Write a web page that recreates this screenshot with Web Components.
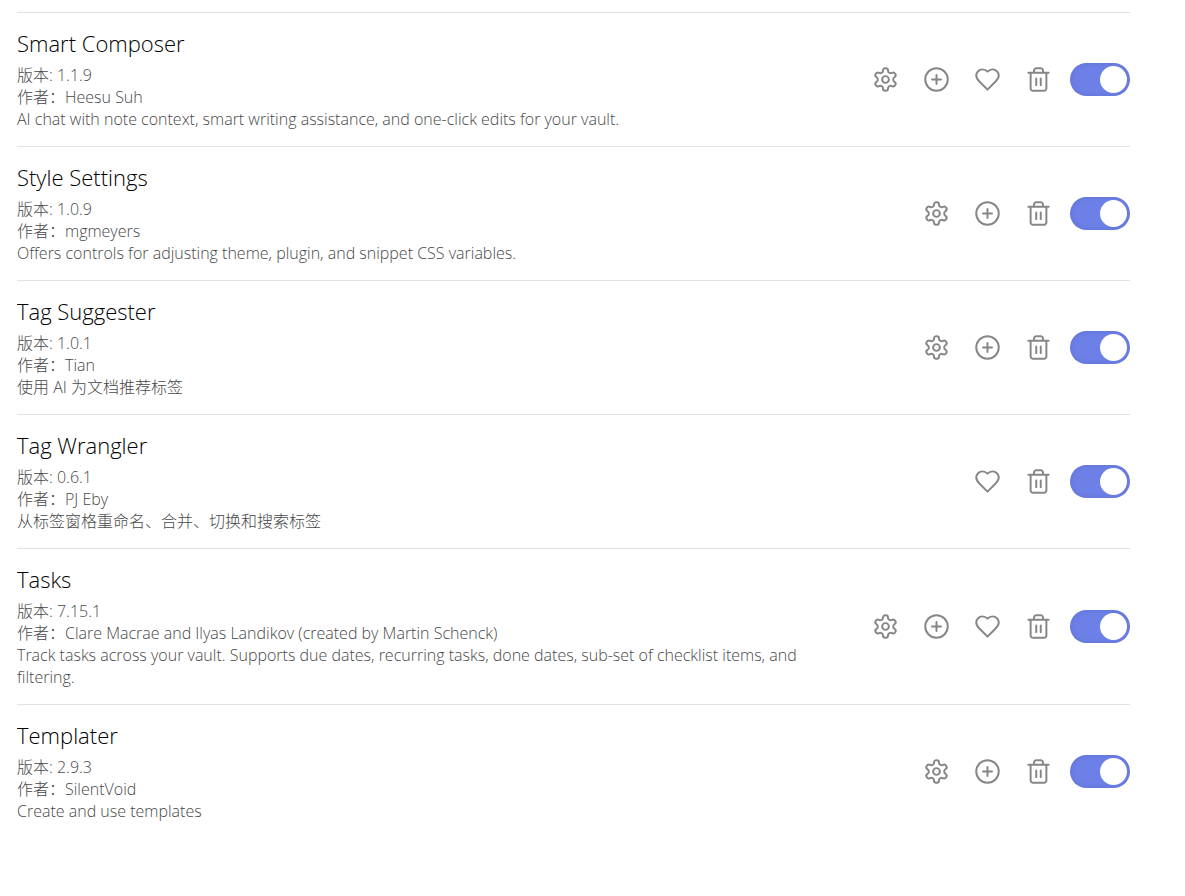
<!DOCTYPE html>
<html lang="zh-CN">
<head>
<meta charset="utf-8">
<title>第三方插件</title>
<style>
body { margin: 0; background: #fff; font-family: "Open Sans", "Noto Sans CJK SC", sans-serif; }
</style>
</head>
<body>
<plugin-list>
  <plugin-item name="Smart Composer" version="1.1.9" author="Heesu Suh" actions="settings hotkeys donate remove">AI chat with note context, smart writing assistance, and one-click edits for your vault.</plugin-item>
  <plugin-item name="Style Settings" version="1.0.9" author="mgmeyers" actions="settings hotkeys remove">Offers controls for adjusting theme, plugin, and snippet CSS variables.</plugin-item>
  <plugin-item name="Tag Suggester" version="1.0.1" author="Tian" actions="settings hotkeys remove">使用 AI 为文档推荐标签</plugin-item>
  <plugin-item name="Tag Wrangler" version="0.6.1" author="PJ Eby" actions="donate remove">从标签窗格重命名、合并、切换和搜索标签</plugin-item>
  <plugin-item name="Tasks" version="7.15.1" author="Clare Macrae and Ilyas Landikov (created by Martin Schenck)" actions="settings hotkeys donate remove">Track tasks across your vault. Supports due dates, recurring tasks, done dates, sub-set of checklist items, and filtering.</plugin-item>
  <plugin-item name="Templater" version="2.9.3" author="SilentVoid" actions="settings hotkeys remove">Create and use templates</plugin-item>
</plugin-list>
<script>
const ICONS = {
  settings: ['设置', '<path d="M12.22 2h-.44a2 2 0 0 0-2 2v.18a2 2 0 0 1-1 1.73l-.43.25a2 2 0 0 1-2 0l-.15-.08a2 2 0 0 0-2.73.73l-.22.38a2 2 0 0 0 .73 2.73l.15.1a2 2 0 0 1 1 1.72v.51a2 2 0 0 1-1 1.74l-.15.09a2 2 0 0 0-.73 2.73l.22.38a2 2 0 0 0 2.73.73l.15-.08a2 2 0 0 1 2 0l.43.25a2 2 0 0 1 1 1.73V20a2 2 0 0 0 2 2h.44a2 2 0 0 0 2-2v-.18a2 2 0 0 1 1-1.73l.43-.25a2 2 0 0 1 2 0l.15.08a2 2 0 0 0 2.73-.73l.22-.39a2 2 0 0 0-.73-2.73l-.15-.08a2 2 0 0 1-1-1.74v-.5a2 2 0 0 1 1-1.74l.15-.09a2 2 0 0 0 .73-2.73l-.22-.38a2 2 0 0 0-2.73-.73l-.15.08a2 2 0 0 1-2 0l-.43-.25a2 2 0 0 1-1-1.73V4a2 2 0 0 0-2-2z"/><circle cx="12" cy="12" r="3"/>'],
  hotkeys: ['快捷键', '<circle cx="12" cy="12" r="10"/><path d="M8 12h8M12 8v8"/>'],
  donate: ['捐赠', '<path d="M19 14c1.49-1.46 3-3.21 3-5.5A5.5 5.5 0 0 0 16.5 3c-1.76 0-3 .5-4.5 2-1.5-1.5-2.74-2-4.5-2A5.5 5.5 0 0 0 2 8.500c0 2.300 1.500 4.050 3 5.500l7 7Z"/>'],
  remove: ['卸载', '<path d="M3 6h18M19 6v14c0 1-1 2-2 2H7c-1 0-2-1-2-2V6M8 6V4c0-1 1-2 2-2h4c1 0 2 1 2 2v2M10 11v6M14 11v6"/>']
};

class PluginList extends HTMLElement {
  constructor() {
    super();
    this.attachShadow({ mode: 'open' }).innerHTML = `
      <style>
        :host { display: block; padding: 12px 55px 0 17px; }
        main { display: flex; flex-direction: column; }
      </style>
      <main><slot></slot></main>`;
  }
}

class IconButton extends HTMLElement {
  connectedCallback() {
    if (this.shadowRoot) return;
    const [label, shapes] = ICONS[this.getAttribute('icon')];
    this.attachShadow({ mode: 'open' }).innerHTML = `
      <style>
        :host { display: block; }
        button { display: flex; padding: 6px; border: 0; border-radius: 6px; background: none; color: #868686; cursor: pointer; }
        button:hover { background: #f0f0f0; }
        svg { width: 27px; height: 27px; fill: none; stroke: currentColor; stroke-width: 1.75; stroke-linecap: round; stroke-linejoin: round; }
      </style>
      <button type="button" aria-label="${label}"><svg viewBox="0 0 24 24" aria-hidden="true">${shapes}</svg></button>`;
  }
}

class ToggleSwitch extends HTMLElement {
  connectedCallback() {
    if (this.shadowRoot) return;
    this.attachShadow({ mode: 'open' }).innerHTML = `
      <style>
        :host { display: block; }
        input { appearance: none; display: flex; box-sizing: border-box; width: 60px; height: 33px; margin: 0; padding: 3px; border-radius: 17px; background: #c8c8c8; box-shadow: inset 0 0 6px rgba(0, 0, 0, .12); cursor: pointer; }
        input::before { content: ""; width: 27px; height: 27px; border-radius: 50%; background: #fff; }
        input:checked { justify-content: flex-end; background: #6d80e8; }
      </style>
      <input type="checkbox" role="switch" checked>`;
    this.shadowRoot.querySelector('input').setAttribute('aria-label', this.getAttribute('label'));
  }
}

class PluginItem extends HTMLElement {
  connectedCallback() {
    if (this.shadowRoot) return;
    const actions = this.getAttribute('actions').split(' ')
      .map(name => `<icon-button icon="${name}"></icon-button>`).join('');
    this.attachShadow({ mode: 'open' }).innerHTML = `
      <style>
        :host { display: block; border-top: 1px solid #e3e3e3; }
        article { display: flex; align-items: center; padding: 16px 0; }
        .info { flex: 1; min-width: 0; margin-right: 48px; font-weight: 300; }
        h2 { margin: 0 0 7px; font-size: 22px; line-height: 28px; font-weight: 300; color: #000; }
        .meta { font-size: 16px; line-height: 22px; color: #484848; }
        .controls { display: flex; align-items: center; gap: 12px; }
      </style>
      <article>
        <div class="info">
          <h2>${this.getAttribute('name')}</h2>
          <div class="meta">版本: ${this.getAttribute('version')}</div>
          <div class="meta">作者：${this.getAttribute('author')}</div>
          <div class="meta"><slot></slot></div>
        </div>
        <div class="controls">${actions}<toggle-switch label="${this.getAttribute('name')}"></toggle-switch></div>
      </article>`;
  }
}

customElements.define('icon-button', IconButton);
customElements.define('toggle-switch', ToggleSwitch);
customElements.define('plugin-item', PluginItem);
customElements.define('plugin-list', PluginList);
</script>
</body>
</html>
